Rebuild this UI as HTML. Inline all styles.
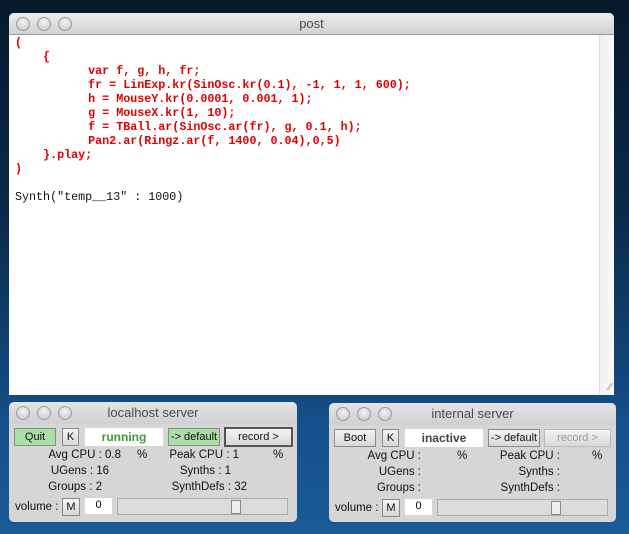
<!DOCTYPE html>
<html><head><style>
*{margin:0;padding:0;box-sizing:border-box}
body{width:629px;height:534px;overflow:hidden;position:relative;background:linear-gradient(180deg,#06182c 0%,#0b2a4a 40%,#14508a 80%,#1a5c98 100%);font-family:"Liberation Sans",sans-serif}
.win{position:absolute;border-radius:5px 5px 0 0;overflow:hidden}
.tb{position:absolute;left:0;right:0;top:0;background:linear-gradient(#ececec,#d2d2d2);border-bottom:1px solid #9a9a9a;text-align:center;color:#4a4a4a}
.dot{position:absolute;width:14px;height:14px;border-radius:50%;background:radial-gradient(circle at 50% 35%,#f4f4f4,#c4c4c4);border:1px solid #9c9c9c}
pre{position:absolute;font-family:"Liberation Mono",monospace;font-size:11.7px;line-height:14px;white-space:pre}
.red{color:#e00000;font-weight:bold}
.srv{background:#d6d6d6;border-radius:5px}
.srv .tb{height:22px;font-size:13px;line-height:22px;background:linear-gradient(#e4e4e4,#d0d0d0);border-bottom:none}
.b{position:absolute;height:18px;font-size:11px;line-height:16px;text-align:center;border:1px solid #8a8a8a;background:linear-gradient(#f4f4f4,#d8d8d8);color:#111}
.g{background:#a8e0a8}
.fld{position:absolute;background:#fff;height:18px;text-align:center;font-size:12px;font-weight:bold;line-height:18px}
.l{position:absolute;font-size:11.5px;color:#111;text-align:right}
</style></head><body>
<div class="win" style="left:9px;top:13px;width:605px;height:382px;background:#fff">
 <div class="tb" style="height:22px;font-size:13px;line-height:22px">post</div>
 <div class="dot" style="left:7px;top:4px"></div><div class="dot" style="left:28px;top:4px"></div><div class="dot" style="left:49px;top:4px"></div>
 <div style="position:absolute;right:0;top:22px;width:15px;bottom:0;background:linear-gradient(90deg,#f0f0f0,#fafafa);border-left:1px solid #ddd"></div>
 <div style="position:absolute;right:2px;bottom:2px;font-size:10px;color:#999">⁄⁄</div>
<pre class="red" style="left:6px;top:23px">(
    {
</pre>
<pre class="red" style="left:6px;top:135px">    }.play;
)</pre>
<pre class="red" style="left:9px;top:51px">          var f, g, h, fr;
          fr = LinExp.kr(SinOsc.kr(0.1), -1, 1, 1, 600);
          h = MouseY.kr(0.0001, 0.001, 1);
          g = MouseX.kr(1, 10);
          f = TBall.ar(SinOsc.ar(fr), g, 0.1, h);
          Pan2.ar(Ringz.ar(f, 1400, 0.04),0,5)</pre>
<pre style="left:6px;top:177px;color:#111">Synth("temp__13" : 1000)</pre>
</div>

<div class="win srv" style="left:9px;top:402px;width:288px;height:120px">
 <div class="tb">localhost server</div>
 <div class="dot" style="left:7px;top:4px"></div><div class="dot" style="left:28px;top:4px"></div><div class="dot" style="left:49px;top:4px"></div>
 <div class="b g" style="left:5px;top:26px;width:42px">Quit</div>
 <div class="b" style="left:53px;top:26px;width:17px">K</div>
 <div class="fld" style="left:76px;top:26px;width:78px;color:#3a9a3a">running</div>
 <div class="b g" style="left:159px;top:26px;width:52px">-&gt; default</div>
 <div class="b" style="left:215px;top:25px;width:69px;height:20px;border:2px solid #555">record &gt;</div>
 <div class="l" style="left:20px;width:92px;top:47px">Avg CPU : 0.8</div><div class="l" style="left:128px;top:47px">%</div>
 <div class="l" style="left:20px;width:80px;top:63px">UGens : 16</div>
 <div class="l" style="left:20px;width:73px;top:79px">Groups : 2</div>
 <div class="l" style="left:150px;width:80px;top:47px">Peak CPU : 1</div><div class="l" style="left:264px;top:47px">%</div>
 <div class="l" style="left:150px;width:72px;top:63px">Synths : 1</div>
 <div class="l" style="left:150px;width:88px;top:79px">SynthDefs : 32</div>
 <div class="l" style="left:6px;top:99px">volume :</div>
 <div class="b" style="left:53px;top:96px;width:18px">M</div>
 <div class="fld" style="left:76px;top:96px;width:27px;font-weight:normal;font-size:11px;line-height:14px;height:16px">0</div>
 <div style="position:absolute;left:108px;top:96px;width:171px;height:17px;border:1px solid #aaa;background:#dcdcdc"></div>
 <div style="position:absolute;left:222px;top:98px;width:10px;height:14px;border:1px solid #888;background:#eee"></div>
</div>

<div class="win srv" style="left:329px;top:403px;width:287px;height:119px">
 <div class="tb">internal server</div>
 <div class="dot" style="left:7px;top:4px"></div><div class="dot" style="left:28px;top:4px"></div><div class="dot" style="left:49px;top:4px"></div>
 <div class="b" style="left:5px;top:26px;width:42px">Boot</div>
 <div class="b" style="left:53px;top:26px;width:17px">K</div>
 <div class="fld" style="left:76px;top:26px;width:78px;color:#444">inactive</div>
 <div class="b" style="left:159px;top:26px;width:52px">-&gt; default</div>
 <div class="b" style="left:215px;top:26px;width:67px;color:#999;border-color:#bbb">record &gt;</div>
 <div class="l" style="left:20px;width:72px;top:47px">Avg CPU :</div><div class="l" style="left:128px;top:47px">%</div>
 <div class="l" style="left:20px;width:72px;top:63px">UGens :</div>
 <div class="l" style="left:20px;width:72px;top:79px">Groups :</div>
 <div class="l" style="left:150px;width:81px;top:47px">Peak CPU :</div><div class="l" style="left:263px;top:47px">%</div>
 <div class="l" style="left:150px;width:81px;top:63px">Synths :</div>
 <div class="l" style="left:150px;width:81px;top:79px">SynthDefs :</div>
 <div class="l" style="left:6px;top:99px">volume :</div>
 <div class="b" style="left:53px;top:96px;width:18px">M</div>
 <div class="fld" style="left:76px;top:96px;width:27px;font-weight:normal;font-size:11px;line-height:14px;height:16px">0</div>
 <div style="position:absolute;left:108px;top:96px;width:171px;height:17px;border:1px solid #aaa;background:#dcdcdc"></div>
 <div style="position:absolute;left:222px;top:98px;width:10px;height:14px;border:1px solid #888;background:#eee"></div>
</div>
</body></html>
